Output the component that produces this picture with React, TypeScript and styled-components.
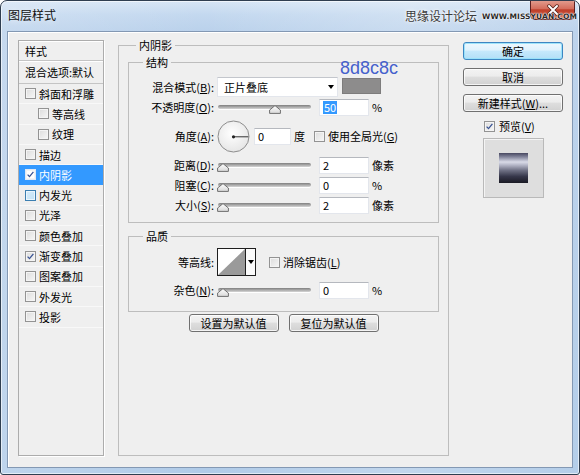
import React from "react";
import styled, { createGlobalStyle } from "styled-components";

const GlobalStyle = createGlobalStyle`
  html, body { margin: 0; padding: 0; background: #ffffff; }
  body {
    font-family: "Noto Sans CJK SC", "Noto Sans", sans-serif;
    font-size: 11px;
    color: #000;
  }
  *, *::before, *::after { box-sizing: border-box; }
`;

const Window = styled.div`
  position: relative;
  width: 580px;
  height: 475px;
  display: flex;
  flex-direction: column;
  padding: 0 6px 6px;
  border: 1px solid #2f3e50;
  border-radius: 7px 7px 3px 3px;
  overflow: hidden;
  background:
    linear-gradient(90deg, rgba(255,255,255,0.18), rgba(255,255,255,0) 35%, rgba(255,255,255,0.22) 70%, rgba(255,255,255,0.05)),
    linear-gradient(180deg, #d6e5f5 0, #c3d8ef 14px, #bad1eb 31px, #b0cbe8 100%);
  box-shadow: inset 0 0 0 1px rgba(255,255,255,0.6);
`;

const TitleBar = styled.div`
  position: relative;
  flex: none;
  height: 30px;
  display: flex;
  align-items: center;
  padding: 0 0 2px 1px;
`;

const Title = styled.div`
  font-size: 12px;
  line-height: 16px;
  color: #101010;
  text-shadow: 0 0 6px rgba(255,255,255,0.9);
`;

const Watermark = styled.div`
  position: absolute;
  left: 398px;
  top: 7px;
  z-index: 2;
  display: flex;
  align-items: center;
  gap: 5px;
  white-space: nowrap;
`;

const WatermarkCn = styled.span`
  font-size: 12px;
  line-height: 16px;
  color: #3a3a3a;
  text-shadow: 0 0 4px #fff, 0 0 2px #fff;
`;

const WatermarkUrl = styled.span`
  font-family: "DejaVu Sans", sans-serif;
  font-size: 7.5px;
  line-height: 10px;
  font-weight: bold;
  color: #2a2a2a;
  letter-spacing: 0.1px;
  text-shadow: 0 0 2px #fff, 0 0 1px #fff, 0 0 1px #fff;
  margin-top: 2px;
`;

const CloseBtn = styled.div`
  position: absolute;
  top: -1px;
  right: -2px;
  width: 45px;
  height: 20px;
  border: 1px solid #5c2020;
  border-top: none;
  border-radius: 0 0 5px 5px;
  background: linear-gradient(180deg, #e3a092 0%, #d46e5d 45%, #bf3f2a 52%, #c84b35 80%, #dc7a5e 100%);
  display: flex;
  align-items: center;
  justify-content: center;
`;

const Client = styled.div`
  flex: 1;
  display: flex;
  align-items: stretch;
  gap: 14px;
  padding: 5px 9px 11px 10px;
  background: #efefef;
  border: 1px solid #8398b3;
  box-shadow: inset 1px 1px 0 #ffffff;
`;

/* ---------- left style list ---------- */

const StyleList = styled.div`
  flex: none;
  width: 86px;
  margin-top: 3px;
  display: flex;
  flex-direction: column;
  border: 1px solid #acacac;
  box-shadow: 1px 1px 0 #ffffff;
  background: #efefef;
`;

const ListHeader = styled.div<{ $h: number }>`
  height: ${(p) => p.$h}px;
  flex: none;
  display: flex;
  align-items: center;
  padding-left: 6px;
  font-size: 11px;
  line-height: 14px;
  white-space: nowrap;
  border-bottom: 1px solid #c4c4c4;
  box-shadow: inset 0 1px 0 #ffffff;
`;

const ListItem = styled.div<{ $indent?: boolean; $selected?: boolean }>`
  height: 20.3px;
  flex: none;
  display: flex;
  align-items: center;
  gap: 3px;
  padding-left: ${(p) => (p.$indent ? 19 : 6)}px;
  font-size: 11px;
  line-height: 14px;
  white-space: nowrap;
  color: ${(p) => (p.$selected ? "#ffffff" : "#000000")};
  background: ${(p) => (p.$selected ? "#3399ff" : "transparent")};
  border-bottom: 1px solid ${(p) => (p.$selected ? "#3399ff" : "#f8f8f8")};
`;

const CheckBox = styled.span<{ $focus?: boolean; $white?: boolean }>`
  flex: none;
  width: 11px;
  height: 11px;
  display: inline-flex;
  align-items: center;
  justify-content: center;
  border: 1px solid ${(p) => (p.$focus ? "#3c7fb1" : p.$white ? "#dfe8f5" : "#939393")};
  background: ${(p) =>
    p.$focus
      ? "linear-gradient(135deg, #d6ecfb, #c2e2f5)"
      : p.$white
      ? "#ffffff"
      : "linear-gradient(135deg, #dcdcdc, #f7f7f7)"};
  box-shadow: inset 0 0 0 1px ${(p) => (p.$focus ? "#eaf6fd" : "#f4f4f4")};
`;

const Check = ({ checked, focus, white }: { checked?: boolean; focus?: boolean; white?: boolean }) => (
  <CheckBox $focus={focus} $white={white}>
    {checked && (
      <svg width="9" height="9" viewBox="0 0 9 9">
        <path d="M1.6 4.6 L3.5 6.6 L7.4 1.8" fill="none" stroke="#3a5494" strokeWidth="1.3" />
      </svg>
    )}
  </CheckBox>
);

/* ---------- center group ---------- */

const Group = styled.fieldset<{ $pad: string; $mt?: number; $w?: number }>`
  margin: ${(p) => p.$mt ?? 0}px 0 0 0;
  padding: ${(p) => p.$pad};
  min-width: 0;
  ${(p) => (p.$w ? `width: ${p.$w}px; flex: none;` : "")}
  border: 1px solid #bdbdbd;
`;

const Legend = styled.legend<{ $ml: number }>`
  margin-left: ${(p) => p.$ml}px;
  padding: 0 3px;
  font-size: 11px;
  line-height: 16px;
`;

const Row = styled.div<{ $h: number; $mt?: number }>`
  position: relative;
  display: flex;
  align-items: center;
  height: ${(p) => p.$h}px;
  margin-top: ${(p) => p.$mt ?? 0}px;
`;

const Label = styled.div`
  flex: none;
  width: 85px;
  margin-right: 3px;
  text-align: right;
  white-space: nowrap;
  font-size: 11px;
  line-height: 14px;
`;

const Key = styled.span`
  text-decoration: underline;
  text-underline-offset: 1px;
`;

const Select = styled.div`
  flex: none;
  width: 121px;
  height: 20px;
  display: flex;
  align-items: center;
  justify-content: space-between;
  padding: 0 3px 0 6px;
  background: #ffffff;
  border: 1px solid #e3e6ec;
  border-top-color: #c3c6cc;
  font-size: 11px;
  line-height: 14px;
`;

const DownArrow = styled.span`
  width: 0;
  height: 0;
  border-left: 3.5px solid transparent;
  border-right: 3.5px solid transparent;
  border-top: 4px solid #000;
`;

const SwatchWrap = styled.div`
  position: relative;
  margin-left: 4px;
  margin-top: -2px;
`;

const Swatch = styled.div<{ $color: string }>`
  width: 39px;
  height: 16px;
  background: ${(p) => p.$color};
  border: 1px solid #7d7c7c;
`;

const HexNote = styled.div`
  position: absolute;
  left: -2px;
  top: -19px;
  font-family: "Liberation Sans", Arial, sans-serif;
  font-size: 18px;
  line-height: 18px;
  color: #4560cc;
  white-space: nowrap;
`;

const SliderWrap = styled.div`
  position: relative;
  flex: none;
  width: 94px;
  align-self: stretch;
`;

const Track = styled.div`
  margin: 8px 0 0 1px;
  height: 4px;
  border-radius: 2px;
  background: linear-gradient(180deg, #7f7f7f 0%, #a9a9a9 50%, #d6d6d6 100%);
  box-shadow: 0 1px 0 #ffffff;
`;

const Thumb = styled.svg<{ $pos: number }>`
  position: absolute;
  top: 8px;
  left: ${(p) => p.$pos}px;
`;

const Slider = ({ pos }: { pos: number }) => (
  <SliderWrap>
    <Track />
    <Thumb $pos={pos} width="12" height="9" viewBox="0 0 12 9">
      <defs>
        <linearGradient id={`tg${pos}`} x1="0" y1="0" x2="0" y2="1">
          <stop offset="0" stopColor="#ffffff" />
          <stop offset="1" stopColor="#d8d8d8" />
        </linearGradient>
      </defs>
      <path d="M6 0.6 L11.4 5 L11.4 8.4 L0.6 8.4 L0.6 5 Z" fill={`url(#tg${pos})`} stroke="#6f6f6f" strokeWidth="1" />
    </Thumb>
  </SliderWrap>
);

const Field = styled.div<{ $w: number; $ml: number }>`
  flex: none;
  width: ${(p) => p.$w}px;
  height: 17px;
  margin-left: ${(p) => p.$ml}px;
  display: flex;
  align-items: center;
  padding-left: 3px;
  background: #ffffff;
  border: 1px solid #e3e6ec;
  border-top-color: #b5b8be;
  font-size: 11px;
  line-height: 13px;
`;

const Selected = styled.span`
  background: #3399ff;
  color: #ffffff;
  padding: 0 1px;
`;

const Unit = styled.span<{ $ml?: number }>`
  margin-left: ${(p) => p.$ml ?? 3}px;
  font-size: 11px;
  line-height: 14px;
  white-space: nowrap;
`;

const Inline = styled.span<{ $ml: number }>`
  display: inline-flex;
  align-items: center;
  gap: 3px;
  margin-left: ${(p) => p.$ml}px;
  font-size: 11px;
  line-height: 14px;
  white-space: nowrap;
`;

const ContourPicker = styled.div`
  flex: none;
  display: flex;
  height: 28px;
  border: 1px solid #1e1e1e;
  background: #ffffff;
`;

const ContourArrow = styled.div`
  width: 10px;
  display: flex;
  align-items: center;
  justify-content: center;
  border-left: 1px solid #1e1e1e;
  background: #fafafa;
`;

const ButtonRow = styled.div`
  display: flex;
  justify-content: center;
  gap: 10px;
  margin-top: 2px;
`;

const Button = styled.button<{ $default?: boolean; $w?: number }>`
  width: ${(p) => p.$w ?? 100}px;
  height: 18px;
  padding: 0;
  font-family: inherit;
  font-size: 11px;
  line-height: 14px;
  color: #000;
  border: 1px solid ${(p) => (p.$default ? "#3d86c2" : "#707070")};
  border-radius: 3px;
  background: ${(p) =>
    p.$default
      ? "linear-gradient(180deg, #eef8fe 0%, #dff2fd 45%, #c6e9fc 50%, #b3dff7 100%)"
      : "linear-gradient(180deg, #f3f3f3 0%, #ececec 45%, #dedede 50%, #d1d1d1 100%)"};
  box-shadow: inset 0 0 0 1px ${(p) => (p.$default ? "rgba(150,225,250,0.9)" : "rgba(255,255,255,0.75)")};
  white-space: nowrap;
`;

/* ---------- right column ---------- */

const RightCol = styled.div`
  flex: none;
  width: 100px;
  display: flex;
  flex-direction: column;
  gap: 8px;
  padding-top: 5px;
`;

const PreviewToggle = styled.div`
  display: flex;
  align-items: center;
  gap: 4px;
  height: 16px;
  margin-top: -2px;
  padding-left: 21px;
  font-size: 11px;
  line-height: 14px;
`;

const PreviewBox = styled.div`
  width: 61px;
  height: 60px;
  margin: -4px 0 0 20px;
  display: flex;
  align-items: center;
  justify-content: center;
  background: #dedede;
  border: 1px solid #b9b9b9;
  box-shadow: inset 1px 1px 0 #f4f4f4;
`;

const PreviewSwatch = styled.div`
  width: 29px;
  height: 30px;
  background: linear-gradient(180deg, #474760 0%, #7d7f96 12%, #d9dbe8 30%, #b5b7c8 40%, #6e7084 58%, #36374a 78%, #1a1a24 100%);
`;

const listItems: { label: string; indent?: boolean; checked?: boolean; selected?: boolean; focus?: boolean }[] = [
  { label: "斜面和浮雕" },
  { label: "等高线", indent: true },
  { label: "纹理", indent: true },
  { label: "描边" },
  { label: "内阴影", checked: true, selected: true },
  { label: "内发光", focus: true },
  { label: "光泽" },
  { label: "颜色叠加" },
  { label: "渐变叠加", checked: true },
  { label: "图案叠加" },
  { label: "外发光" },
  { label: "投影" },
];

export default function App() {
  return (
    <>
      <GlobalStyle />
      <Window>
        <TitleBar>
          <Title>图层样式</Title>
          <Watermark>
            <WatermarkCn>思缘设计论坛</WatermarkCn>
            <WatermarkUrl>WWW.MISSYUAN.COM</WatermarkUrl>
          </Watermark>
          <CloseBtn>
            <svg width="14" height="12" viewBox="0 0 14 12">
              <path d="M3 2 L11 10 M11 2 L3 10" stroke="#4a1a14" strokeWidth="3.4" strokeLinecap="round" />
              <path d="M3 2 L11 10 M11 2 L3 10" stroke="#ffffff" strokeWidth="2" strokeLinecap="round" />
            </svg>
          </CloseBtn>
        </TitleBar>

        <Client>
          <StyleList>
            <ListHeader $h={20}>样式</ListHeader>
            <ListHeader $h={23}>混合选项:默认</ListHeader>
            {listItems.map((it) => (
              <ListItem key={it.label} $indent={it.indent} $selected={it.selected}>
                <Check checked={it.checked} focus={it.focus} white={it.selected} />
                <span>{it.label}</span>
              </ListItem>
            ))}
          </StyleList>

          <Group $pad="1px 9px 0 9px" $w={331}>
            <Legend $ml={8}>内阴影</Legend>

            <Group $pad="7px 0 7px 0">
              <Legend $ml={14}>结构</Legend>
              <Row $h={20}>
                <Label>
                  混合模式(<Key>B</Key>):
                </Label>
                <Select>
                  <span>正片叠底</span>
                  <DownArrow />
                </Select>
                <SwatchWrap>
                  <HexNote>8d8c8c</HexNote>
                  <Swatch $color="#8d8c8c" />
                </SwatchWrap>
              </Row>
              <Row $h={20}>
                <Label>
                  不透明度(<Key>O</Key>):
                </Label>
                <Slider pos={52} />
                <Field $w={50} $ml={8}>
                  <Selected>50</Selected>
                </Field>
                <Unit>%</Unit>
              </Row>
              <Row $h={38}>
                <Label>
                  角度(<Key>A</Key>):
                </Label>
                <svg width="33" height="33" viewBox="0 0 33 33">
                  <defs>
                    <radialGradient id="dialg" cx="0.45" cy="0.4" r="0.6">
                      <stop offset="0" stopColor="#ffffff" />
                      <stop offset="1" stopColor="#e6e6e6" />
                    </radialGradient>
                  </defs>
                  <circle cx="16.5" cy="16.5" r="15.5" fill="url(#dialg)" stroke="#8c8c8c" strokeWidth="1" />
                  <line x1="16.5" y1="16.8" x2="31.5" y2="16.8" stroke="#333" strokeWidth="1" />
                  <circle cx="16.5" cy="16.8" r="1.6" fill="#222" />
                </svg>
                <Field $w={37} $ml={4}>0</Field>
                <Unit>度</Unit>
                <Inline $ml={9}>
                  <Check />
                  <span>
                    使用全局光(<Key>G</Key>)
                  </span>
                </Inline>
              </Row>
              <Row $h={20}>
                <Label>
                  距离(<Key>D</Key>):
                </Label>
                <Slider pos={0} />
                <Field $w={50} $ml={8}>2</Field>
                <Unit>像素</Unit>
              </Row>
              <Row $h={20}>
                <Label>
                  阻塞(<Key>C</Key>):
                </Label>
                <Slider pos={0} />
                <Field $w={50} $ml={8}>0</Field>
                <Unit>%</Unit>
              </Row>
              <Row $h={20}>
                <Label>
                  大小(<Key>S</Key>):
                </Label>
                <Slider pos={0} />
                <Field $w={50} $ml={8}>2</Field>
                <Unit>像素</Unit>
              </Row>
            </Group>

            <Group $pad="4px 0 11px 0" $mt={5}>
              <Legend $ml={14}>品质</Legend>
              <Row $h={28}>
                <Label>等高线:</Label>
                <ContourPicker>
                  <svg width="27" height="26" viewBox="0 0 27 26">
                    <rect x="0" y="0" width="27" height="26" fill="#ffffff" />
                    <polygon points="0,26 27,0 27,26" fill="#9a9a9a" />
                  </svg>
                  <ContourArrow>
                    <DownArrow />
                  </ContourArrow>
                </ContourPicker>
                <Inline $ml={13}>
                  <Check />
                  <span>
                    消除锯齿(<Key>L</Key>)
                  </span>
                </Inline>
              </Row>
              <Row $h={20} $mt={4}>
                <Label>
                  杂色(<Key>N</Key>):
                </Label>
                <Slider pos={0} />
                <Field $w={50} $ml={8}>0</Field>
                <Unit>%</Unit>
              </Row>
            </Group>

            <ButtonRow>
              <Button $w={90}>设置为默认值</Button>
              <Button $w={90}>复位为默认值</Button>
            </ButtonRow>
          </Group>

          <RightCol>
            <Button $default>确定</Button>
            <Button>取消</Button>
            <Button>
              新建样式(<Key>W</Key>)...
            </Button>
            <PreviewToggle>
              <Check checked />
              <span>
                预览(<Key>V</Key>)
              </span>
            </PreviewToggle>
            <PreviewBox>
              <PreviewSwatch />
            </PreviewBox>
          </RightCol>
        </Client>
      </Window>
    </>
  );
}
